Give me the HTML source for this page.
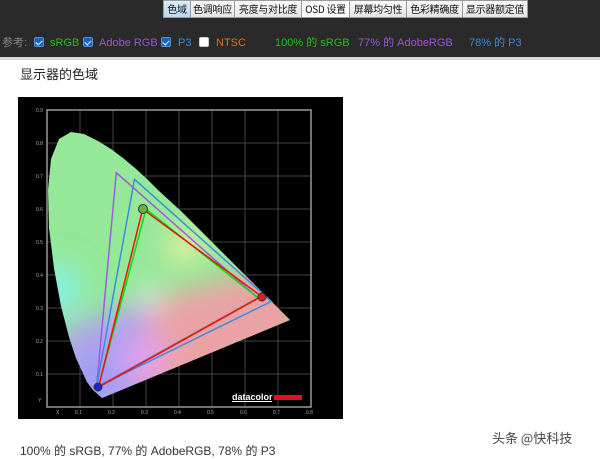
<!DOCTYPE html>
<html><head><meta charset="utf-8"><style>
*{margin:0;padding:0;box-sizing:border-box}
body{width:600px;height:459px;background:#fff;position:relative;overflow:hidden;font-family:"Liberation Sans","Noto Sans CJK SC",sans-serif}
.bar{position:absolute;left:0;top:0;width:600px;height:57px;background:#2a2a2a}
.line{position:absolute;left:0;top:57px;width:600px;height:3px;background:#d8d8d8}
.tab{position:absolute;top:0;height:18px;background:linear-gradient(#fafafa,#e4e4e4);border:1px solid #9a9a9a;font-size:10px;line-height:16px;text-align:center;color:#111;font-family:"Noto Sans CJK SC",sans-serif;white-space:nowrap;overflow:hidden;letter-spacing:-0.3px}
.tab.sel{background:linear-gradient(#dcecfc,#b9d7f5)}
.r{position:absolute;top:36px;font-size:11px;line-height:14px;font-family:"Liberation Sans","Noto Sans CJK SC",sans-serif}
.cb{position:absolute;top:37px;width:10px;height:10px;border-radius:2px;background:#1565c0;border:1px solid #5a8fd0}
.cb:after{content:"";position:absolute;left:2px;top:1px;width:3px;height:5px;border:solid #fff;border-width:0 1px 1px 0;transform:rotate(45deg)}
.cb.off{background:#fff;border-color:#ccc}.cb.off:after{display:none}
</style></head><body>
<div class="bar"></div><div class="line"></div>
<div class="tab sel" style="left:163px;width:28px">色域</div>
<div class="tab" style="left:190px;width:45px">色调响应</div>
<div class="tab" style="left:234px;width:68px">亮度与对比度</div>
<div class="tab" style="left:301px;width:49px;background:#fff">OSD 设置</div>
<div class="tab" style="left:349px;width:58px">屏幕均匀性</div>
<div class="tab" style="left:406px;width:57px">色彩精确度</div>
<div class="tab" style="left:462px;width:66px">显示器额定值</div>
<div class="r" style="left:2px;color:#888">参考:</div>
<div class="cb" style="left:34px"></div><div class="r" style="left:50px;color:#1fbf1f">sRGB</div>
<div class="cb" style="left:83px"></div><div class="r" style="left:99px;color:#9a55d8">Adobe RGB</div>
<div class="cb" style="left:161px"></div><div class="r" style="left:178px;color:#3a8ad8">P3</div>
<div class="cb off" style="left:199px"></div><div class="r" style="left:216px;color:#e07020">NTSC</div>
<div class="r" style="left:275px;color:#1fbf1f">100% 的 sRGB</div>
<div class="r" style="left:358px;color:#9a55d8">77% 的 AdobeRGB</div>
<div class="r" style="left:469px;color:#3a8ad8">78% 的 P3</div>
<div style="position:absolute;left:20px;top:64px;font-size:13px;color:#222;font-family:'Noto Sans CJK SC',sans-serif">显示器的色域</div>
<svg style="position:absolute;left:18px;top:97px" width="325" height="322" viewBox="18 97 325 322">
<defs>
<clipPath id="loc"><path d="M102,398 L93,390 L87,382 L76,358 L69,337 L61,306 L54,268 L49,228 L48,190 L51,159 L59,139 L71,132 L84,134 L98,141 L111,149 L123,158 L135,168 L147,179 L158,190 L170,201 L182,212 L194,224 L205,235 L216,246 L227,257 L237,267 L246,276 L254,284 L261,291 L267,297 L271,301 L290,320 Z"/></clipPath>
<filter id="bl" x="-50%" y="-50%" width="200%" height="200%"><feGaussianBlur stdDeviation="14"/></filter>
</defs>
<rect x="18" y="97" width="325" height="322" fill="#000"/>
<g stroke="#444" stroke-width="1">
<path d="M80,110V407M113,110V407M146,110V407M179,110V407M212,110V407M245,110V407M278,110V407M47,143H311M47,176H311M47,209H311M47,242H311M47,275H311M47,308H311M47,341H311M47,374H311"/>
</g>
<rect x="47" y="110" width="264" height="297" fill="none" stroke="#999" stroke-width="1.5"/>
<g fill="#aaa" font-size="5" font-family="Liberation Sans">
<text x="36" y="112">0.9</text><text x="36" y="145">0.8</text><text x="36" y="178">0.7</text><text x="36" y="211">0.6</text><text x="36" y="244">0.5</text><text x="36" y="277">0.4</text><text x="36" y="310">0.3</text><text x="36" y="343">0.2</text><text x="36" y="376">0.1</text><text x="38" y="402">Y</text>
<text x="56" y="414">X</text><text x="75" y="414">0.1</text><text x="108" y="414">0.2</text><text x="141" y="414">0.3</text><text x="174" y="414">0.4</text><text x="207" y="414">0.5</text><text x="240" y="414">0.6</text><text x="273" y="414">0.7</text><text x="306" y="414">0.8</text>
</g>
<g clip-path="url(#loc)">
<rect x="40" y="120" width="260" height="300" fill="#94e898"/>
<g filter="url(#bl)">
<polygon points="150,300 300,260 300,420 140,420" fill="#eaa2a4"/>
<polygon points="150,300 140,420 60,420 60,330" fill="#b0a0f0"/>
<circle cx="145" cy="360" r="22" fill="#e6a0ee"/>
<circle cx="55" cy="290" r="26" fill="#86f0e4"/>
<circle cx="95" cy="380" r="22" fill="#9a9cf6"/>
<circle cx="185" cy="245" r="18" fill="#f0f0a0"/>
<circle cx="150" cy="298" r="10" fill="#f6f6fa"/>
</g>
</g>
<g fill="none" stroke-width="1.5">
<path d="M258,298 L116.3,172.7 L96.5,387.2 Z" stroke="#a05ae0"/>
<path d="M271.4,301.4 L134.5,179.3 L96.5,387.2 Z" stroke="#3a8ee0"/>
<path d="M258.2,298 L146,209 L98.5,387.2 Z" stroke="#00e000"/>
<path d="M261.5,296.4 L142.7,209 L98.5,387.2 Z" stroke="#f01010"/>
</g>
<circle cx="143" cy="209" r="4.5" fill="#6ab040" stroke="#333"/>
<circle cx="262" cy="297" r="4" fill="#e02020" stroke="#333"/>
<circle cx="98" cy="387" r="4" fill="#2020d0" stroke="#333"/>
<text x="232" y="400" fill="#fff" font-size="9" font-weight="bold" font-family="Liberation Sans">datacolor</text>
<rect x="232" y="401" width="40" height="1" fill="#fff"/>
<rect x="274" y="395" width="28" height="5" fill="#e01020"/>
</svg>
<div style="position:absolute;left:20px;top:442px;font-size:12px;color:#333">100% 的 sRGB, 77% 的 AdobeRGB, 78% 的 P3</div>
<div style="position:absolute;left:492px;top:428px;font-size:13px;color:#444;font-family:'Noto Sans CJK SC',sans-serif">头条 @快科技</div>
</body></html>
